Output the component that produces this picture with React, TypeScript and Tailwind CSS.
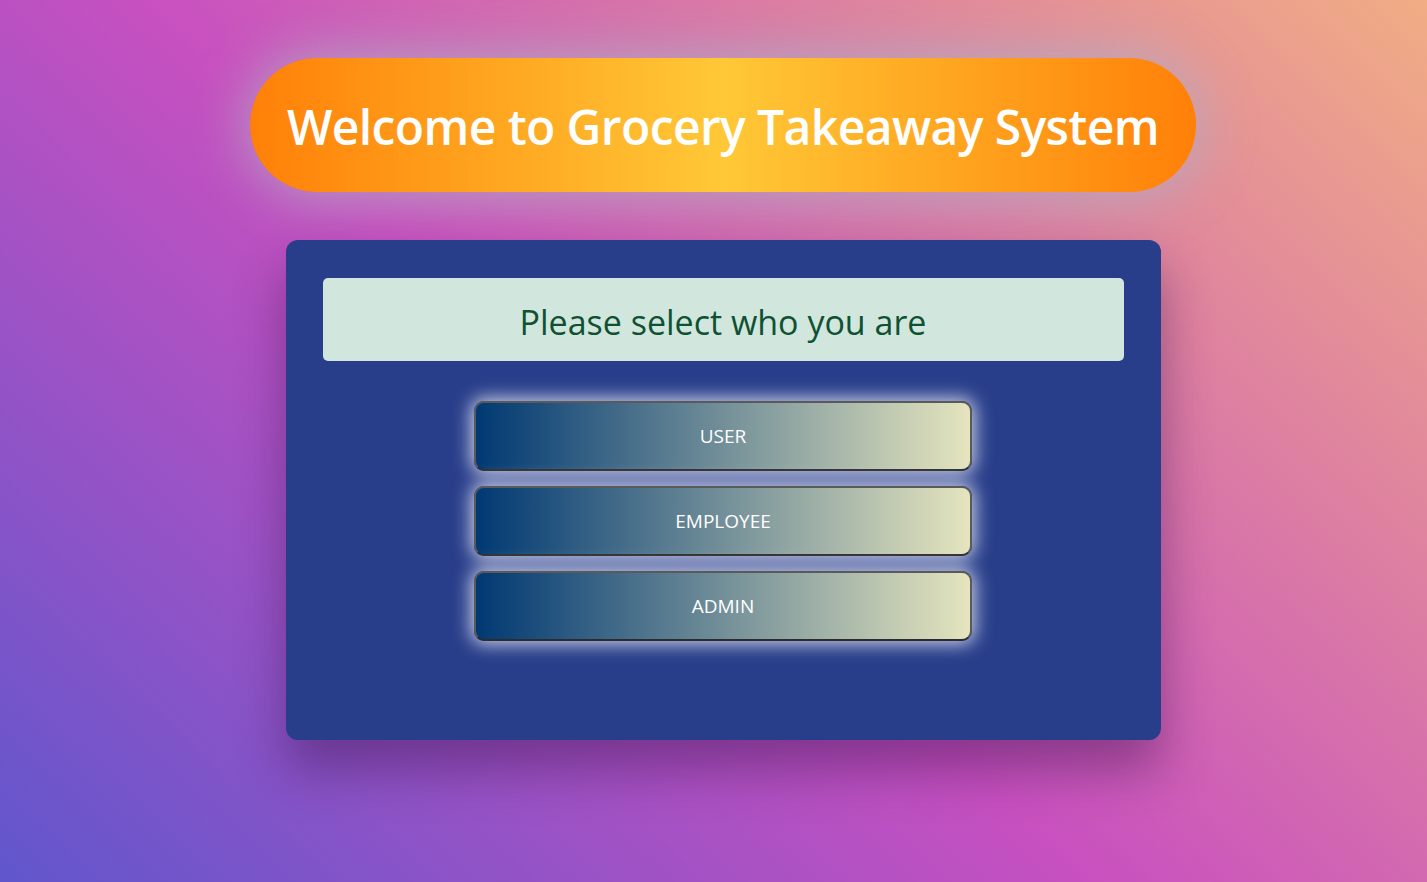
const roles = ['USER', 'EMPLOYEE', 'ADMIN'];

export default function App() {
  return (
    <div
      className="min-h-[882px] w-full bg-[#4158D0] bg-[linear-gradient(43deg,#4158D0_-14%,#C850C0_46%,#FFCC70_118%)] font-['Open_Sans','Noto_Sans',sans-serif]"
    >
      <div className="flex flex-col items-center pl-[19px] pt-[58px]">
        {/* Title pill */}
        <div className="h-[134px] w-[946px] flex justify-center items-center rounded-full bg-[linear-gradient(to_right,#ff8008,#ffc837,#ff8008)] shadow-[0_0_60px_rgba(175,175,195,0.95)]">
          <h1 className="text-[48px] font-semibold text-white tracking-[-0.6px] leading-none pt-1">
            Welcome to Grocery Takeaway System
          </h1>
        </div>

        {/* Card */}
        <div className="mt-[48px] h-[500px] w-[875px] flex flex-col items-center rounded-xl bg-[#283e8a] px-[37px] pt-[38px] shadow-[0_30px_50px_rgba(60,20,80,0.45)]">
          <div className="h-[83px] w-full flex justify-center items-center rounded-[5px] bg-[#d1e7dd]">
            <p className="text-[34px] font-medium text-[#0f5132] leading-none pt-1">
              Please select who you are
            </p>
          </div>

          <div className="mt-[40px] flex flex-col gap-[15px]">
            {roles.map((role) => (
              <button
                key={role}
                className="h-[70px] w-[498px] flex justify-center items-center rounded-[10px] border-2 border-[#5a5a5a] border-b-[#2c2c2c] bg-[linear-gradient(to_right,#003973,#E5E5BE)] shadow-[0_0_18px_3px_rgba(245,245,255,0.8)] text-[19px] text-white"
              >
                {role}
              </button>
            ))}
          </div>
        </div>
      </div>
    </div>
  );
}
